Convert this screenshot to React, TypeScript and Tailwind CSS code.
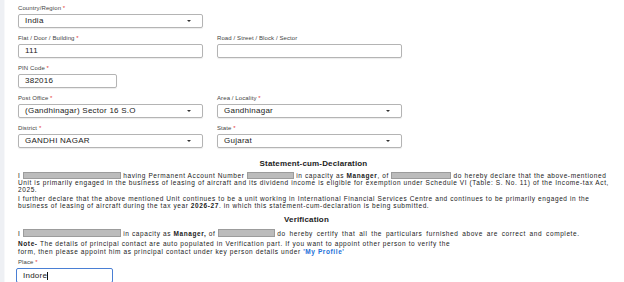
import React from "react";

function Label({ text, req = true }: { text: string; req?: boolean }) {
  return (
    <div className="text-[6px] tracking-[0.1px] leading-[9px] mb-[1px] text-[#444] whitespace-nowrap">
      {text}
      {req && <span className="text-[#e53935]"> *</span>}
    </div>
  );
}

function Input({ value, w = "w-[185px]" }: { value: string; w?: string }) {
  return (
    <div className={`${w} h-[14px] border border-[#b4b4b4] rounded-[2px] shadow-[0_1px_1px_rgba(0,0,0,0.08)] px-[6px] flex items-center text-[8px] tracking-[0.25px] text-[#222]`}>
      {value}
    </div>
  );
}

function Select({ value }: { value: string }) {
  return (
    <div className="w-[185px] h-[14px] border border-[#b4b4b4] rounded-[2px] shadow-[0_1px_1px_rgba(0,0,0,0.08)] pl-[6px] pr-[11px] flex items-center justify-between text-[8px] tracking-[0.25px] text-[#222]">
      <span>{value}</span>
      <span className="w-0 h-0 border-l-[2.5px] border-r-[2.5px] border-t-[2.5px] border-l-transparent border-r-transparent border-t-[#333]" />
    </div>
  );
}

function Field({ label, children, req = true }: { label: string; children: React.ReactNode; req?: boolean }) {
  return (
    <div>
      <Label text={label} req={req} />
      {children}
    </div>
  );
}

function Redact({ w, h = "h-[7px]" }: { w: string; h?: string }) {
  return <span className={`inline-block ${w} ${h} align-[-1px] bg-[#bcbcbc] border border-[#9c9c9c]`} />;
}

export default function App() {
  return (
    <div className="w-[624px] h-[282px] overflow-hidden bg-white flex font-['Liberation_Sans',Arial,sans-serif]">
      <div className="w-[5px] shrink-0 bg-[#eef0f4] border-r border-[#f7f8fa]" />
      <div className="flex-1 pl-[13px] pt-[4px] pr-[18px]">
        <div className="flex flex-col gap-[6px]">
          <Field label="Country/Region">
            <Select value="India" />
          </Field>
          <div className="flex gap-[14px]">
            <Field label="Flat / Door / Building">
              <Input value="111" />
            </Field>
            <Field label="Road / Street / Block / Sector" req={false}>
              <Input value="" />
            </Field>
          </div>
          <Field label="PIN Code">
            <Input value="382016" w="w-[99px]" />
          </Field>
          <div className="flex gap-[14px]">
            <Field label="Post Office">
              <Select value="(Gandhinagar) Sector 16 S.O" />
            </Field>
            <Field label="Area / Locality">
              <Select value="Gandhinagar" />
            </Field>
          </div>
          <div className="flex gap-[14px]">
            <Field label="District">
              <Select value="GANDHI NAGAR" />
            </Field>
            <Field label="State">
              <Select value="Gujarat" />
            </Field>
          </div>
        </div>

        <div className="mt-[11px] text-center font-bold text-[8px] tracking-[0.15px] leading-[10px] text-[#222]">Statement-cum-Declaration</div>
        <div className="text-[6.5px] tracking-[0.6px] leading-[7px] text-[#1a1a1a] mt-[3px] whitespace-nowrap">
          <p>
            I <Redact w="w-[98px]" /> having Permanent Account Number <Redact w="w-[47px]" /> in capacity as <b>Manager</b>, of{" "}
            <Redact w="w-[60px]" /> do hereby declare that the above-mentioned
            <br />
            Unit is primarily engaged in the business of leasing of aircraft and its dividend income is eligible for exemption under Schedule VI (Table: S. No. 11) of the Income-tax Act,
            <br />
            2025.
          </p>
          <p className="mt-[2px]">
            I further declare that the above mentioned Unit continues to be a unit working in International Financial Services Centre and continues to be primarily engaged in the
            <br />
            business of leasing of aircraft during the tax year <b>2026-27</b>. in which this statement-cum-declaration is being submitted.
          </p>
        </div>

        <div className="mt-[6px] pr-[14px] text-center font-bold text-[8px] tracking-[0.15px] leading-[10px] text-[#222]">Verification</div>
        <div className="text-[6.5px] tracking-[0.6px] text-[#1a1a1a] mt-[4px] whitespace-nowrap">
          <p className="leading-[9px]">
            I <Redact w="w-[98px]" h="h-[8px]" /> in capacity as <b>Manager,</b> of <Redact w="w-[57px]" h="h-[8px]" />{" "}
            <span className="[word-spacing:1.4px]">do hereby certify that all the particulars furnished above are correct and complete.</span>
          </p>
          <p className="mt-[2px] leading-[8px]">
            <b>Note-</b> The details of principal contact are auto populated in Verification part. If you want to appoint other person to verify the
            <br />
            form, then please appoint him as principal contact under key person details under{" "}
            <span className="text-[#1a6fd8] font-bold">'My Profile'</span>
          </p>
        </div>

        <div className="mt-[2px]">
          <Label text="Place" />
          <div className="w-[97px] h-[15px] -ml-[2px] border border-[#4a7fd4] rounded-[2px] px-[6px] flex items-center text-[8px] tracking-[0.25px] text-[#222]">
            Indore<span className="inline-block w-[1px] h-[8px] bg-[#111]" />
          </div>
        </div>
      </div>
    </div>
  );
}
